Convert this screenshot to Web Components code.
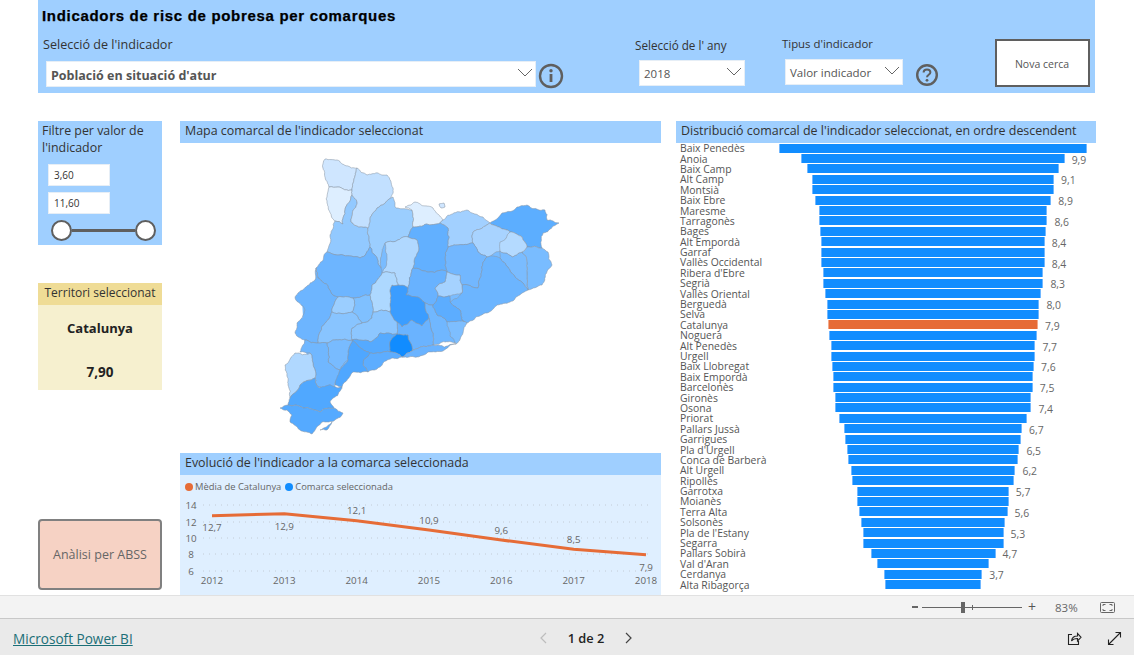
<!DOCTYPE html>
<html lang="ca">
<head>
<meta charset="utf-8">
<title>Indicadors de risc de pobresa per comarques</title>
<style>
  html, body { margin: 0; height: 100%; background: #fff; }
  body {
    display: flex;
    flex-direction: column;
    width: 1134px;
    height: 655px;
    overflow: hidden;
    font-family: "Open Sans", "Noto Sans", sans-serif;
    color: #333;
  }
  .canvas { height: 595px; padding-left: 38px; box-sizing: border-box; }
  .columns {
    display: grid;
    grid-template-columns: 124px 481px 419px;
    column-gap: 18px;
    margin-top: 28px;
  }
  .columns > div { display: flex; flex-direction: column; }
  .columns > div:nth-child(3) { margin-left: -3px; }
  pbi-filter { margin-bottom: 38px; }
  pbi-territory { margin-bottom: 129px; }
</style>
</head>
<body>
  <div class="canvas">
    <pbi-header></pbi-header>
    <div class="columns">
      <div>
        <pbi-filter></pbi-filter>
        <pbi-territory></pbi-territory>
        <pbi-action>Anàlisi per ABSS</pbi-action>
      </div>
      <div>
        <pbi-map></pbi-map>
        <pbi-line-chart></pbi-line-chart>
      </div>
      <div>
        <pbi-ranking></pbi-ranking>
      </div>
    </div>
  </div>
  <pbi-zoom-bar></pbi-zoom-bar>
  <pbi-footer></pbi-footer>

<script>
const FONT = '"Open Sans", "Noto Sans", sans-serif';
const CHEVRON = '<svg width="16" height="9" viewBox="0 0 16 9"><path d="M1 1l7 7 7-7" fill="none" stroke="#666" stroke-width="1"/></svg>';

class PbiTitleBar extends HTMLElement {
  constructor() {
    super();
    this.attachShadow({ mode: 'open' }).innerHTML = `
      <style>
        :host {
          display: block;
          height: 22px;
          padding-left: 5px;
          background: #9fcfff;
          color: #333;
          font: 12.45px/20px ${FONT};
          white-space: nowrap;
        }
      </style>
      <slot></slot>
    `;
  }
}
customElements.define('pbi-title-bar', PbiTitleBar);

class PbiDropdown extends HTMLElement {
  constructor() {
    super();
    this.attachShadow({ mode: 'open' }).innerHTML = `
      <style>
        :host {
          display: flex;
          align-items: center;
          justify-content: space-between;
          box-sizing: border-box;
          height: 26px;
          padding: 1px 2px 0 4px;
          background: #fff;
          border: 1px solid #e6eef6;
          color: #555;
          font: 11.5px ${FONT};
        }
        :host([bold]) { font-weight: 700; font-size: 12.5px; padding-top: 3px; }
        svg { display: block; margin-bottom: 4px; }
        :host([bold]) svg { margin-bottom: 6px; }
      </style>
      <slot></slot>${CHEVRON}
    `;
  }
}
customElements.define('pbi-dropdown', PbiDropdown);

class PbiHeader extends HTMLElement {
  constructor() {
    super();
    this.attachShadow({ mode: 'open' }).innerHTML = `
      <style>
        :host {
          display: block;
          width: 1057px;
          height: 93px;
          box-sizing: border-box;
          padding: 6px 0 0 4px;
          background: #9fcfff;
        }
        h1 {
          margin: 0;
          height: 30px;
          color: #000;
          font: 700 15px/20px "Liberation Sans", sans-serif;
          letter-spacing: .69px;
          -webkit-text-stroke: .25px #000;
          white-space: nowrap;
        }
        .row { display: flex; align-items: flex-start; }
        .lbl { font: 12.6px/18px ${FONT}; color: #333; white-space: nowrap; margin-left: 1px; }
        .year .lbl { font-size: 11.7px; margin-left: 0; }
        .kind .lbl { font-size: 11.4px; }
        .slicer { display: flex; flex-direction: column; }
        .slicer pbi-dropdown { margin-left: 4px; }
        .main { width: 494px; }
        .main pbi-dropdown { margin-top: 7px; }
        .year { width: 110px; margin-left: 71px; }
        .year pbi-dropdown { margin-top: 6px; width: 106px; }
        .kind { width: 122px; margin-left: 36px; margin-top: -1px; }
        .kind pbi-dropdown { margin-top: 6px; width: 118px; }
        .hint { flex: none; display: block; }
        .info { margin: 26.6px 0 0 2px; }
        .help { margin: 26.7px 0 0 12px; }
        button {
          flex: none;
          width: 95px;
          height: 48px;
          margin: 3px 0 0 55.5px;
          padding-top: 2px;
          background: #fff;
          border: 2.5px solid #5f5f5f;
          color: #555;
          font: 10.5px ${FONT};
        }
      </style>
      <h1>Indicadors de risc de pobresa per comarques</h1>
      <div class="row">
        <div class="slicer main">
          <span class="lbl">Selecció de l'indicador</span>
          <pbi-dropdown bold>Població en situació d'atur</pbi-dropdown>
        </div>
        <svg class="hint info" width="26" height="26" viewBox="0 0 26 26">
          <circle cx="13" cy="13" r="11" fill="none" stroke="#5f5f5f" stroke-width="2.4"/>
          <rect x="11.6" y="11" width="2.8" height="8" fill="#5f5f5f"/>
          <circle cx="13" cy="7.8" r="1.7" fill="#5f5f5f"/>
        </svg>
        <div class="slicer year">
          <span class="lbl">Selecció de l' any</span>
          <pbi-dropdown>2018</pbi-dropdown>
        </div>
        <div class="slicer kind">
          <span class="lbl">Tipus d'indicador</span>
          <pbi-dropdown>Valor indicador</pbi-dropdown>
        </div>
        <svg class="hint help" width="24" height="24" viewBox="0 0 24 24">
          <circle cx="12" cy="12" r="9.8" fill="none" stroke="#5f5f5f" stroke-width="2.4"/>
          <path d="M8.6 9.6c0-2 1.5-3.2 3.4-3.2s3.4 1.2 3.4 2.9c0 2.5-3.4 2.5-3.4 5" fill="none" stroke="#5f5f5f" stroke-width="2"/>
          <circle cx="12" cy="17.3" r="1.4" fill="#5f5f5f"/>
        </svg>
        <button>Nova cerca</button>
      </div>
    `;
  }
}
customElements.define('pbi-header', PbiHeader);

class PbiFilter extends HTMLElement {
  constructor() {
    super();
    this.attachShadow({ mode: 'open' }).innerHTML = `
      <style>
        :host {
          display: block;
          height: 124px;
          box-sizing: border-box;
          padding: 1px 4px 0;
          background: #9fcfff;
          color: #333;
          font: 12.4px/17px ${FONT};
        }
        .box {
          width: 62px;
          height: 22px;
          margin: 0 0 6px 6px;
          box-sizing: border-box;
          padding-left: 5px;
          background: #fff;
          border: 1px solid #e6eef6;
          color: #333;
          font: 10px/20px ${FONT};
        }
        .title { height: 42px; }
        .slider { display: flex; align-items: center; margin: 0 0 0 9px; width: 105px; }
        .knob {
          flex: none;
          width: 21px;
          height: 21px;
          box-sizing: border-box;
          border-radius: 50%;
          background: #fff;
          border: 2px solid #5f5f5f;
        }
        .track { flex: 1; height: 2.5px; background: #5f5f5f; }
      </style>
      <div class="title">Filtre per valor de l'indicador</div>
      <div class="box">3,60</div>
      <div class="box">11,60</div>
      <div class="slider"><span class="knob"></span><span class="track"></span><span class="knob"></span></div>
    `;
  }
}
customElements.define('pbi-filter', PbiFilter);

class PbiTerritory extends HTMLElement {
  constructor() {
    super();
    this.attachShadow({ mode: 'open' }).innerHTML = `
      <style>
        :host {
          display: block;
          height: 107px;
          background: #f6f0cf;
          color: #222;
          text-align: center;
          font-family: ${FONT};
        }
        .head {
          height: 22px;
          background: #efdc96;
          color: #333;
          font-size: 12px;
          line-height: 20px;
          white-space: nowrap;
        }
        .name { margin-top: 14px; font-size: 13px; font-weight: 700; line-height: 18px; }
        .val { margin-top: 26px; font-size: 13.5px; font-weight: 700; line-height: 18px; }
      </style>
      <div class="head">Territori seleccionat</div>
      <div class="name">Catalunya</div>
      <div class="val">7,90</div>
    `;
  }
}
customElements.define('pbi-territory', PbiTerritory);

class PbiAction extends HTMLElement {
  constructor() {
    super();
    this.attachShadow({ mode: 'open' }).innerHTML = `
      <style>
        :host {
          display: flex;
          align-items: center;
          justify-content: center;
          height: 71px;
          box-sizing: border-box;
          background: #f6d2c4;
          border: 2px solid #808080;
          border-radius: 4px;
          color: #666;
          font: 12.5px ${FONT};
        }
      </style>
      <slot></slot>
    `;
  }
}
customElements.define('pbi-action', PbiAction);

// page coordinates, painted in order; neighbours share edges
const COMARQUES = [
  ['#cfe6ff', [[325,159],[337,160],[357,168],[352,190],[338,187],[329,187],[323,168]]],
  ['#ddeeff', [[329,187],[338,187],[352,190],[352,195],[345,210],[343,224],[335,221],[327,203]]],
  ['#92c9ff', [[345,210],[352,195],[357,202],[351,222],[368,228],[370,247],[360,258],[327,252],[330,235],[335,221],[343,224]]],
  ['#c2e0ff', [[357,168],[367,175],[387,175],[393,188],[391,198],[377,208],[368,228],[351,222],[357,202],[352,195],[352,190]]],
  ['#9bceff', [[377,208],[391,198],[393,197],[396,208],[412,210],[413,227],[408,237],[385,243],[382,252],[381,268],[370,247],[368,228]]],
  ['#ddeeff', [[405,207],[415,202],[433,208],[443,220],[440,223],[413,227],[412,210]]],
  ['#a2d0ff', [[443,220],[467,210],[483,217],[490,223],[473,232],[473,243],[448,247],[448,228],[440,223]]],
  ['#5caeff', [[490,223],[502,213],[517,207],[527,205],[545,210],[547,220],[559,223],[543,233],[542,248],[527,247],[522,237],[510,232]]],
  ['#a8d3ff', [[473,232],[490,223],[510,232],[500,251],[487,257],[478,252],[473,243]]],
  ['#79bcff', [[527,247],[542,248],[548,252],[552,265],[542,285],[528,290],[527,272],[522,252]]],
  ['#7abcff', [[500,251],[513,257],[522,252],[527,272],[528,290],[515,277],[500,258]]],
  ['#b4daff', [[500,242],[510,232],[522,237],[527,247],[522,252],[513,257],[500,251]]],
  ['#72b7ff', [[448,247],[473,243],[478,252],[487,257],[480,278],[478,288],[462,285],[460,275],[447,272],[445,258]]],
  ['#6cb5ff', [[487,257],[500,258],[515,277],[528,290],[510,302],[487,313],[467,323],[462,320],[460,310],[450,302],[462,293],[462,285],[478,288],[480,278]]],
  ['#62b0ff', [[408,237],[413,227],[440,223],[448,228],[448,247],[445,258],[447,272],[442,270],[427,272],[413,268],[418,252],[417,240]]],
  ['#b0d8ff', [[385,243],[408,237],[417,240],[418,252],[413,268],[408,288],[398,285],[395,273],[382,273],[387,258]]],
  ['#68b2ff', [[413,268],[427,272],[442,270],[447,272],[445,282],[435,288],[438,296],[433,305],[425,303],[406,295],[408,288]]],
  ['#a5d2ff', [[435,288],[445,282],[447,272],[460,275],[462,285],[462,293],[450,296],[438,296]]],
  ['#3b9dff', [[392,285],[398,285],[408,288],[406,295],[425,303],[429,318],[422,326],[412,320],[402,327],[397,322],[390,312],[390,290]]],
  ['#70b7ff', [[425,303],[433,305],[437,315],[447,322],[465,322],[458,335],[455,343],[433,345],[433,333],[429,318]]],
  ['#5cadff', [[433,305],[438,296],[450,296],[450,302],[460,310],[462,320],[465,322],[447,322],[437,315]]],
  ['#7dbeff', [[447,322],[467,323],[463,333],[456,344],[450,336]]],
  ['#6ab3ff', [[397,322],[402,327],[412,320],[422,326],[429,318],[433,333],[433,345],[412,351],[408,335],[397,334]]],
  ['#6db5ff', [[316,268],[327,252],[360,258],[370,247],[381,268],[382,273],[372,285],[370,295],[353,298],[338,297],[333,295],[318,278]]],
  ['#6db5ff', [[316,268],[318,278],[333,295],[338,297],[332,312],[320,332],[318,343],[305,340],[295,333],[297,323],[305,310],[295,298],[298,293],[315,280]]],
  ['#9bceff', [[332,312],[338,297],[353,298],[355,305],[352,312]]],
  ['#7fc0ff', [[352,312],[355,305],[353,298],[370,295],[373,312],[372,318],[362,323]]],
  ['#add8ff', [[370,295],[372,285],[382,273],[395,273],[398,285],[392,285],[390,290],[390,312],[373,312]]],
  ['#8cc6ff', [[352,328],[362,323],[372,318],[373,312],[390,312],[397,322],[397,334],[380,333],[370,342],[352,340]]],
  ['#88c4ff', [[318,343],[320,332],[332,312],[352,312],[362,323],[352,328],[352,340],[338,340],[327,343]]],
  ['#55aaff', [[352,340],[370,342],[380,333],[397,334],[390,342],[390,352],[370,353],[358,346]]],
  ['#118cff', [[390,342],[397,334],[408,335],[412,351],[402,357],[390,352]]],
  ['#6ab3ff', [[412,351],[433,345],[456,344],[428,352],[402,357]]],
  ['#5dadff', [[370,353],[390,352],[402,357],[383,363],[368,372],[363,365]]],
  ['#4fa7ff', [[335,385],[337,373],[348,360],[352,340],[358,346],[370,353],[363,365],[368,372],[353,372],[342,387]]],
  ['#78bbff', [[327,343],[338,340],[352,340],[348,360],[340,370],[328,362]]],
  ['#70b7ff', [[305,340],[318,343],[327,343],[328,362],[340,370],[335,387],[318,387],[315,378],[310,353],[300,352]]],
  ['#b0d8ff', [[285,365],[295,353],[310,353],[315,378],[300,385],[290,398],[288,385]]],
  ['#50a8ff', [[300,385],[315,378],[318,387],[342,387],[330,402],[334,408],[320,412],[303,408],[288,405],[290,398]]],
  ['#55aaff', [[280,408],[288,405],[303,408],[320,412],[334,408],[343,413],[335,420],[322,422],[312,434],[290,422],[292,415]]],
  ['#55aaff', [[320,430],[332,422],[327,430]]],
  ['#cfe6ff', [[439,204],[444,203],[445,207],[441,208]]]
];

// goes under the comarques so small mismatches between their borders don't show white
const MAP_FILL = [[332,255],[370,235],[440,228],[500,238],[524,252],[524,285],[465,320],[400,352],[350,368],[322,392],[305,350],[302,300]];

function edgeNoise(ax, ay, bx, by) {
  const s = Math.sin(ax * 12.9898 + ay * 78.233 + bx * 37.719 + by * 94.673) * 43758.5453;
  return (s - Math.floor(s)) - 0.5;
}

// midpoint displacement keyed on the sorted ends, so both neighbours get the same border
function roughEdge(a, b) {
  const len = Math.hypot(b[0] - a[0], b[1] - a[1]);
  if (len < 2.4) return [];
  const swap = a[0] > b[0] || (a[0] === b[0] && a[1] > b[1]);
  const p = swap ? b : a;
  const q = swap ? a : b;
  const n = edgeNoise(p[0], p[1], q[0], q[1]) * len * 0.24;
  const m = [
    (p[0] + q[0]) / 2 - (q[1] - p[1]) / len * n,
    (p[1] + q[1]) / 2 + (q[0] - p[0]) / len * n
  ];
  return [...roughEdge(a, m), m, ...roughEdge(m, b)];
}

function roughPath(points) {
  const out = [];
  points.forEach((pt, i) => {
    out.push(pt, ...roughEdge(pt, points[(i + 1) % points.length]));
  });
  return 'M' + out.map(p => p[0].toFixed(1) + ' ' + p[1].toFixed(1)).join('L') + 'Z';
}

class PbiMap extends HTMLElement {
  constructor() {
    super();
    const paths = COMARQUES.map(c => `<path d="${roughPath(c[1])}" fill="${c[0]}"/>`).join('');
    const under = 'M' + MAP_FILL.map(p => p.join(' ')).join('L') + 'Z';
    this.attachShadow({ mode: 'open' }).innerHTML = `
      <style>
        :host { display: block; height: 332px; }
        svg { display: block; filter: blur(.3px); }
        path { stroke: #8a97a5; stroke-width: .55; stroke-linejoin: round; }
        path.under { stroke: none; }
      </style>
      <pbi-title-bar>Mapa comarcal de l'indicador seleccionat</pbi-title-bar>
      <svg width="481" height="310" viewBox="180 143 481 310"><path class="under" d="${under}" fill="#7abcff"/>${paths}</svg>
    `;
  }
}
customElements.define('pbi-map', PbiMap);

const EVOLUTION = [
  [2012, 12.7, 212, 515.7, 531],
  [2013, 12.9, 284.3, 513.7, 530],
  [2014, 12.1, 356.7, 520.7, 514],
  [2015, 10.9, 429, 530, 524],
  [2016, 9.6, 501.3, 540, 534],
  [2017, 8.5, 573.7, 549.3, 543],
  [2018, 7.9, 646, 554.7, 571]
];

class PbiLineChart extends HTMLElement {
  constructor() {
    super();
    const yTicks = [[14, 505], [12, 522], [10, 538], [8, 554], [6, 571]];
    const grid = yTicks.map(t => `
      <line x1="203" x2="652" y1="${t[1]}" y2="${t[1]}" class="grid"/>
      <text x="191" y="${t[1] + 4}" text-anchor="middle">${t[0]}</text>`).join('');
    const labels = EVOLUTION.map(d => `
      <text x="${d[2]}" y="${d[4]}" text-anchor="middle">${d[1].toFixed(1).replace('.', ',')}</text>
      <text x="${d[2]}" y="584" text-anchor="middle">${d[0]}</text>`).join('');
    const line = EVOLUTION.map(d => d[2] + ',' + d[3]).join(' ');
    this.attachShadow({ mode: 'open' }).innerHTML = `
      <style>
        :host { display: block; height: 142px; background: #dfefff; overflow: hidden; }
        .legend {
          display: flex;
          align-items: center;
          height: 23px;
          margin-bottom: 2px;
          padding-left: 5px;
          color: #666;
          font: 9.4px ${FONT};
          white-space: nowrap;
        }
        .dot { width: 8px; height: 8px; border-radius: 50%; margin-right: 2px; }
        .second { margin-left: 4px; }
        svg { display: block; }
        text { fill: #666; font: 9.8px ${FONT}; }
        .grid { stroke: #c3ccd6; stroke-width: 1; stroke-dasharray: 1 5; }
      </style>
      <pbi-title-bar>Evolució de l'indicador a la comarca seleccionada</pbi-title-bar>
      <div class="legend">
        <span class="dot" style="background:#e66c37"></span>Mèdia de Catalunya
        <span class="dot second" style="background:#118dff"></span>Comarca seleccionada
      </div>
      <svg width="481" height="95" viewBox="180 500 481 95">
        ${grid}
        <polyline points="${line}" fill="none" stroke="#e66c37" stroke-width="3"/>
        ${labels}
      </svg>
    `;
  }
}
customElements.define('pbi-line-chart', PbiLineChart);

const RANKING = [
  ['Baix Penedès', 11.6], ['Anoia', 9.9], ['Baix Camp', 9.5], ['Alt Camp', 9.1], ['Montsià', 9.1],
  ['Baix Ebre', 8.9], ['Maresme', 8.6], ['Tarragonès', 8.6], ['Bages', 8.5], ['Alt Empordà', 8.4],
  ['Garraf', 8.4], ['Vallès Occidental', 8.4], ["Ribera d'Ebre", 8.3], ['Segrià', 8.3], ['Vallès Oriental', 8.1],
  ['Berguedà', 8.0], ['Selva', 8.0], ['Catalunya', 7.9], ['Noguera', 7.8], ['Alt Penedès', 7.7],
  ['Urgell', 7.7], ['Baix Llobregat', 7.6], ['Baix Empordà', 7.5], ['Barcelonès', 7.5], ['Gironès', 7.4],
  ['Osona', 7.4], ['Priorat', 7.1], ['Pallars Jussà', 6.7], ['Garrigues', 6.6], ["Pla d'Urgell", 6.5],
  ['Conca de Barberà', 6.4], ['Alt Urgell', 6.2], ['Ripollès', 6.1], ['Garrotxa', 5.7], ['Moianès', 5.7],
  ['Terra Alta', 5.6], ['Solsonès', 5.4], ["Pla de l'Estany", 5.3], ['Segarra', 5.3], ['Pallars Sobirà', 4.7],
  ["Val d'Aran", 4.2], ['Cerdanya', 3.7], ['Alta Ribagorça', 3.6]
];

class PbiRanking extends HTMLElement {
  constructor() {
    super();
    const rows = RANKING.map((r, i) => {
      const cat = r[0] === 'Catalunya' ? ' cat' : '';
      const showValue = i % 2 === 1;
      return `
        <div class="row">
          <span class="name">${r[0]}</span>
          <span class="track">
            <span class="side"></span>
            <span class="bar${cat}" style="width:${(r[1] * 26.6).toFixed(1)}px"></span>
            <span class="side">${showValue ? `<span class="val">${r[1].toFixed(1).replace('.', ',')}</span>` : ''}</span>
          </span>
        </div>`;
    }).join('');
    this.attachShadow({ mode: 'open' }).innerHTML = `
      <style>
        :host { display: block; width: 420px; }
        .rows { display: grid; grid-auto-rows: 10.4px; width: 420px; margin-top: 0; }
        .row { display: flex; align-items: center; height: 10.4px; }
        .name {
          flex: none;
          width: 98.5px;
          padding-left: 4px;
          color: #555;
          font: 10.4px/10px ${FONT};
          white-space: nowrap;
        }
        .track { display: flex; align-items: center; flex: none; width: 309px; }
        .side { flex: 1; min-width: 0; white-space: nowrap; }
        .bar {
          flex: none;
          box-sizing: border-box;
          height: 9px;
          background: #118dff;
          border: 1px solid #70b7ff;
          border-width: 0 1px;
        }
        .bar.cat { background: #e66c37; border-color: #f3a98a; }
        .val {
          display: inline-block;
          margin: -1px 0 0 7px;
          color: #666;
          font: 10.4px/10px ${FONT};
          transform: translateY(-1px);
        }
      </style>
      <pbi-title-bar>Distribució comarcal de l'indicador seleccionat, en ordre descendent</pbi-title-bar>
      <div class="rows">${rows}</div>
    `;
  }
}
customElements.define('pbi-ranking', PbiRanking);

class PbiZoomBar extends HTMLElement {
  constructor() {
    super();
    this.attachShadow({ mode: 'open' }).innerHTML = `
      <style>
        :host {
          display: flex;
          align-items: center;
          flex: none;
          height: 24px;
          box-sizing: border-box;
          padding-left: 912px;
          background: #f3f3f3;
          border-top: 1px solid #e1e1e1;
          border-bottom: 1px solid #c8c8c8;
          color: #666;
          font: 11px ${FONT};
        }
        .minus { width: 6px; height: 2px; background: #666; margin-right: 4px; }
        .plus { margin-left: 6px; font-size: 14px; line-height: 14px; color: #555; }
        .pct { margin-left: 19px; width: 37px; font-size: 11.5px; }
        .slider {
          position: relative;
          width: 100px;
          height: 1px;
          background: #666;
        }
        .thumb { position: absolute; left: 39px; top: -5px; width: 4px; height: 11px; background: #666; }
        .tick { position: absolute; left: 50px; top: -2px; width: 1px; height: 5px; background: #666; }
        svg { display: block; margin-left: 8px; }
      </style>
      <span class="minus"></span>
      <span class="slider"><span class="tick"></span><span class="thumb"></span></span>
      <span class="plus">+</span>
      <span class="pct">83%</span>
      <svg width="15" height="11" viewBox="0 0 15 11" fill="none" stroke="#666">
        <rect x=".5" y=".5" width="14" height="10" rx="1"/>
        <path d="M3 4V2.5h2.5M12 4V2.5H9.5M3 7v1.5h2.5M12 7v1.5H9.5"/>
      </svg>
    `;
  }
}
customElements.define('pbi-zoom-bar', PbiZoomBar);

class PbiFooter extends HTMLElement {
  constructor() {
    super();
    this.attachShadow({ mode: 'open' }).innerHTML = `
      <style>
        :host {
          display: flex;
          align-items: center;
          flex: 1;
          box-sizing: border-box;
          padding: 2px 12px 0 13px;
          background: #eaeaea;
          font: 13.6px ${FONT};
        }
        a { width: 527px; color: #1b6f77; text-decoration: underline; white-space: nowrap; }
        .pages { display: flex; align-items: center; color: #222; font-weight: 600; font-size: 12.8px; }
        .pages span { width: 38px; margin: 0 20px; white-space: nowrap; text-align: center; }
        .right { display: flex; align-items: center; margin-left: auto; gap: 25px; }
        svg { display: block; }
      </style>
      <a href="#">Microsoft Power BI</a>
      <div class="pages">
        <svg width="7" height="12" viewBox="0 0 7 12"><path d="M6 1L1 6l5 5" fill="none" stroke="#bdbdbd" stroke-width="1.2"/></svg>
        <span>1 de 2</span>
        <svg width="7" height="12" viewBox="0 0 7 12"><path d="M1 1l5 5-5 5" fill="none" stroke="#444" stroke-width="1.2"/></svg>
      </div>
      <div class="right">
        <svg width="15" height="15" viewBox="0 0 15 15" fill="none" stroke="#222" stroke-width="1.1">
          <path d="M5 3.5H1.5v10h10V10"/>
          <path d="M4.5 10c.4-3.4 2.8-5 6-5V2.5l3.500 3.800-3.500 3.700V7.500c-2.500 0-4.700.6-6 2.500z"/>
        </svg>
        <svg width="15" height="15" viewBox="0 0 15 15" fill="none" stroke="#222" stroke-width="1.1">
          <path d="M1.5 13.5l12-12M8.5 1.5h5v5M1.5 8.5v5h5"/>
        </svg>
      </div>
    `;
  }
}
customElements.define('pbi-footer', PbiFooter);
</script>
</body>
</html>
